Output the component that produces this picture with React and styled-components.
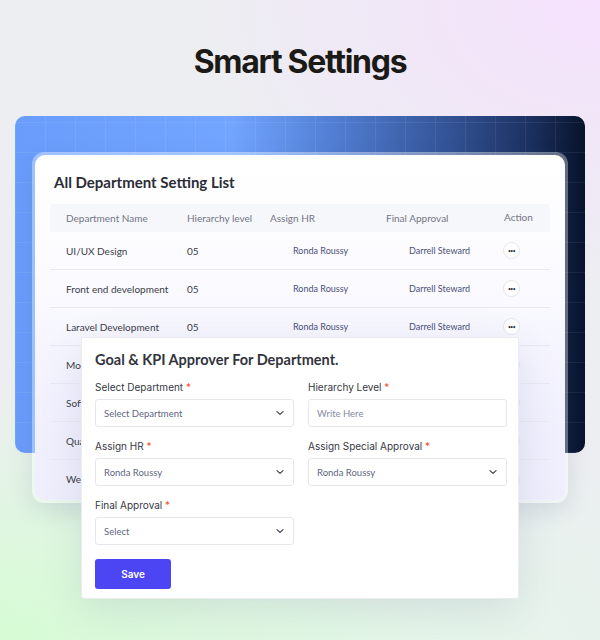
import React from 'react'
import styled, {createGlobalStyle} from 'styled-components'

const GlobalStyle = createGlobalStyle`
  html, body {
    margin: 0;
    padding: 0;
  }
  body {
    width: 600px;
    height: 640px;
    overflow: hidden;
    font-family: Lato, "Noto Sans", sans-serif;
  }
`

const rows = [
    {name: 'UI/UX Design'},
    {name: 'Front end development'},
    {name: 'Laravel Development'},
    {name: 'Mobile App Development'},
    {name: 'Software Testing'},
    {name: 'Quality Assurance'},
    {name: 'Web Development'},
]

const Chevron = () => (
    <svg width="10" height="10" viewBox="0 0 10 10" fill="none">
        <path d="M2 3.6 L5 6.4 L8 3.6" stroke="#3f4250" strokeWidth="1.2" strokeLinecap="round" strokeLinejoin="round" />
    </svg>
)

const App = () => {
    return (
        <Page>
            <GlobalStyle />
            <Title>Smart Settings</Title>
            <Banner>
                <Frame>
                    <Card>
                        <CardTitle>All Department Setting List</CardTitle>
                        <HeadRow>
                            <HeadCell>Department Name</HeadCell>
                            <HeadCell>Hierarchy level</HeadCell>
                            <HeadCell>Assign HR</HeadCell>
                            <HeadCell>Final Approval</HeadCell>
                            <HeadCell raised>Action</HeadCell>
                        </HeadRow>
                        {rows.map((r, i) => (
                            <Row key={r.name} last={i === rows.length - 1}>
                                <Cell>{r.name}</Cell>
                                <Cell>05</Cell>
                                <PersonCell>Ronda Roussy</PersonCell>
                                <PersonCell>Darrell Steward</PersonCell>
                                <ActionBtn>•••</ActionBtn>
                            </Row>
                        ))}
                    </Card>
                </Frame>
            </Banner>

            <Modal>
                <ModalTitle>Goal &amp; KPI Approver For Department.</ModalTitle>
                <FormGrid>
                    <Field>
                        <Label>Select Department <Star>*</Star></Label>
                        <Control>
                            <ControlText>Select Department</ControlText>
                            <Chevron />
                        </Control>
                    </Field>
                    <Field>
                        <Label>Hierarchy Level <Star>*</Star></Label>
                        <Control>
                            <ControlText faint>Write Here</ControlText>
                        </Control>
                    </Field>
                    <Field>
                        <Label>Assign HR <Star>*</Star></Label>
                        <Control>
                            <ControlText>Ronda Roussy</ControlText>
                            <Chevron />
                        </Control>
                    </Field>
                    <Field>
                        <Label>Assign Special Approval <Star>*</Star></Label>
                        <Control>
                            <ControlText>Ronda Roussy</ControlText>
                            <Chevron />
                        </Control>
                    </Field>
                    <Field>
                        <Label>Final Approval <Star>*</Star></Label>
                        <Control>
                            <ControlText>Select</ControlText>
                            <Chevron />
                        </Control>
                    </Field>
                </FormGrid>
                <SaveButton>Save</SaveButton>
            </Modal>
        </Page>
    )
}

export default App

const Page = styled.div`
    position: relative;
    width: 600px;
    height: 640px;
    overflow: hidden;
    background:
        radial-gradient(ellipse 420px 300px at 100% 0%, #f5e1fd 0%, rgba(245,225,253,0) 100%),
        radial-gradient(ellipse 420px 260px at 0% 100%, #d6fcd4 0%, rgba(214,252,212,0) 100%),
        radial-gradient(ellipse 500px 200px at 60% 100%, #e4f6e8 0%, rgba(228,246,232,0) 100%),
        #eceef1;
`

const Title = styled.h1`
    margin: 0;
    padding-top: 42px;
    text-align: center;
    font-family: Inter, "Liberation Sans", sans-serif;
    font-weight: 700;
    font-size: 32px;
    line-height: 40px;
    letter-spacing: -1.3px;
    color: #1b1a17;
`

const Banner = styled.div`
    margin: 34px 0 0 15px;
    width: 570px;
    height: 337px;
    box-sizing: border-box;
    padding: 36px 17px 0;
    border-radius: 10px;
    background:
        repeating-linear-gradient(90deg, rgba(255,255,255,0.07) 0 1px, transparent 1px 30px),
        repeating-linear-gradient(0deg, rgba(255,255,255,0.07) 0 1px, transparent 1px 30px),
        linear-gradient(90deg, #6a9dfb 0%, #72a5ff 38%, #5380d6 55%, #35569a 75%, #1d3262 90%, #08132b 100%);
`

const Frame = styled.div`
    height: 351px;
    padding: 3px;
    box-sizing: border-box;
    border-radius: 12px;
    background: rgba(255,255,255,0.35);
    box-shadow: 0 8px 24px rgba(40, 60, 110, 0.12);
`

const Card = styled.div`
    height: 345px;
    box-sizing: border-box;
    padding: 17px 15px 0;
    border-radius: 10px;
    overflow: hidden;
    background: linear-gradient(180deg, #ffffff 0%, #fbfbff 35%, #f2f1fe 70%, #eeeefc 100%);
`

const CardTitle = styled.h2`
    margin: 0 0 12px 4px;
    font-size: 15px;
    line-height: 20px;
    font-weight: 700;
    color: #2b2c36;
`

const HeadRow = styled.div`
    display: grid;
    grid-template-columns: 121px 83px 116px 118px 1fr;
    align-items: center;
    height: 28px;
    padding-left: 16px;
    background: #f6f7fa;
    border-radius: 3px;
`

const HeadCell = styled.div`
    font-size: 10px;
    color: #737685;
    margin-top: ${p => (p.raised ? '-3px' : '0')};
`

const Row = styled.div`
    display: grid;
    grid-template-columns: 121px 83px 116px 118px 1fr;
    align-items: center;
    height: 38px;
    box-sizing: border-box;
    padding-left: 16px;
    border-bottom: ${p => (p.last ? 'none' : '1px solid #e9e9f1')};
`

const Cell = styled.div`
    font-size: 10px;
    color: #3b3c47;
    white-space: nowrap;
`

const PersonCell = styled.div`
    font-size: 9px;
    color: #4a5078;
    padding-left: 23px;
    white-space: nowrap;
`

const ActionBtn = styled.div`
    width: 15px;
    height: 15px;
    border-radius: 50%;
    border: 1px solid #e3e4ea;
    background: #fff;
    display: flex;
    align-items: center;
    justify-content: center;
    font-size: 5px;
    letter-spacing: -0.5px;
    color: #2b2c36;
    margin-left: -1px;
`

const Modal = styled.div`
    position: absolute;
    left: 81px;
    top: 337px;
    width: 438px;
    height: 262px;
    box-sizing: border-box;
    padding: 12px 13px 0;
    background: #fff;
    border: 1px solid #ebebf0;
    border-radius: 3px;
    box-shadow: 0 10px 40px rgba(60, 70, 120, 0.12);
`

const ModalTitle = styled.h3`
    margin: 0 0 11px;
    font-size: 14.5px;
    line-height: 20px;
    font-weight: 700;
    color: #33343d;
`

const FormGrid = styled.div`
    display: grid;
    grid-template-columns: 199px 199px;
    column-gap: 14px;
    row-gap: 13px;
`

const Field = styled.div`
    display: flex;
    flex-direction: column;
    gap: 5px;
`

const Label = styled.div`
    font-family: Inter, "Liberation Sans", sans-serif;
    font-size: 10px;
    line-height: 13px;
    color: #363845;
`

const Star = styled.span`
    color: #f2522e;
`

const Control = styled.div`
    height: 28px;
    box-sizing: border-box;
    padding: 0 8px;
    display: flex;
    align-items: center;
    justify-content: space-between;
    border: 1px solid #e6e7ec;
    border-radius: 3px;
    background: #fff;
`

const ControlText = styled.span`
    font-size: 9.5px;
    color: ${p => (p.faint ? '#868ca3' : '#60667f')};
`

const SaveButton = styled.button`
    margin-top: 14px;
    width: 76px;
    height: 30px;
    border: none;
    border-radius: 3px;
    background: #4c45f4;
    color: #fff;
    font-family: Inter, "Liberation Sans", sans-serif;
    font-size: 10px;
    font-weight: 600;
`
